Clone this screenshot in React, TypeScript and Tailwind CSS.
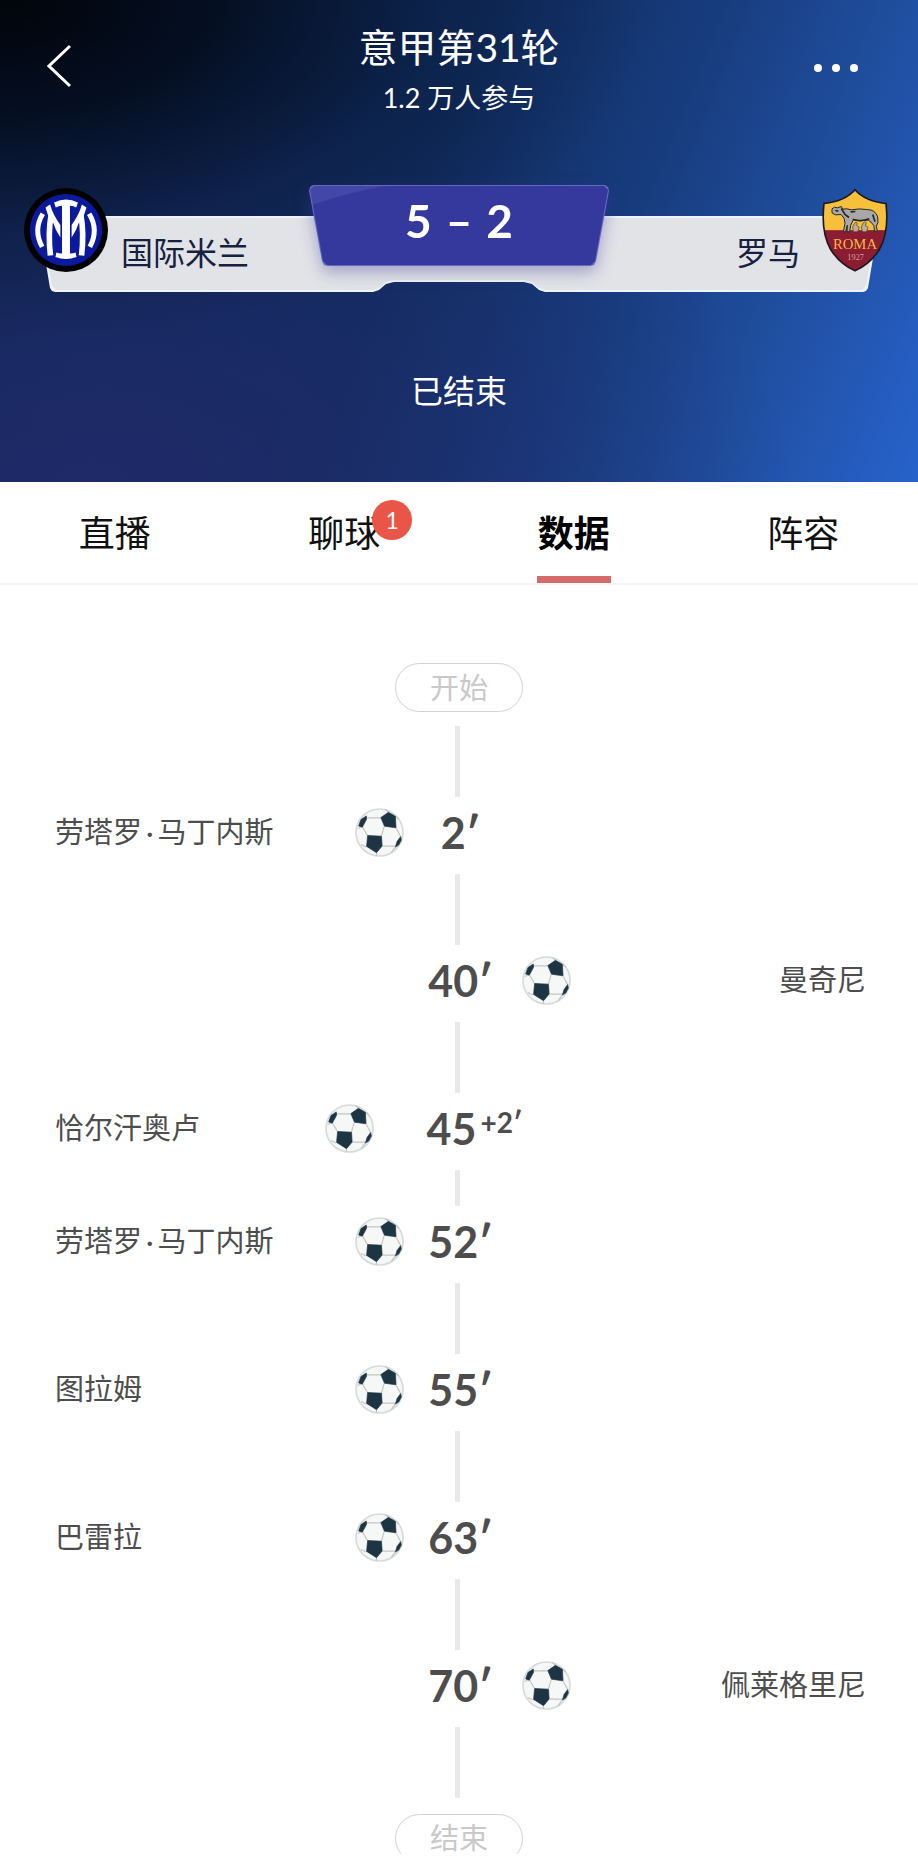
import React from "react";

type Side = "home" | "away";

interface MatchEvent {
  minute: string;
  extra?: string;
  player: string;
  side: Side;
  shortGap?: boolean;
}

const events: MatchEvent[] = [
  { minute: "2", player: "劳塔罗·马丁内斯", side: "home" },
  { minute: "40", player: "曼奇尼", side: "away" },
  { minute: "45", extra: "+2", player: "恰尔汗奥卢", side: "home", shortGap: true },
  { minute: "52", player: "劳塔罗·马丁内斯", side: "home" },
  { minute: "55", player: "图拉姆", side: "home" },
  { minute: "63", player: "巴雷拉", side: "home" },
  { minute: "70", player: "佩莱格里尼", side: "away" },
];

const tabs = [
  { label: "直播" },
  { label: "聊球", badge: 1 },
  { label: "数据", active: true },
  { label: "阵容" },
];

function InterCrest() {
  return (
    <svg viewBox="10 10 254 254" className="size-[84px] shrink-0" aria-hidden="true">
      <circle cx="137" cy="137" r="127" fill="#020205" />
      <circle cx="137" cy="137" r="109" fill="#0b1a9c" />
      <path d="M101 54 Q137 36 173 54 L168 69 Q160 64 149 64 L149 208 Q160 208 166 205 L169 219 Q137 231 105 219 L108 205 Q114 208 125 208 L125 64 Q114 64 106 69 Z" fill="#fff" />
      <g fill="none" stroke="#fff">
        <path d="M67 88 Q37 137 65 188" strokeWidth="15" />
        <path d="M92 92 Q82 148 90 214" strokeWidth="17" />
      </g>
      <path d="M75 69 L89 60 Q97 90 120 122 L120 160 Q106 140 97 112 L84 96 Z" fill="#fff" />
      <g transform="translate(274 0) scale(-1 1)">
        <g fill="none" stroke="#fff">
          <path d="M67 88 Q37 137 65 188" strokeWidth="15" />
          <path d="M92 92 Q82 148 90 214" strokeWidth="17" />
        </g>
        <path d="M75 69 L89 60 Q97 90 120 122 L120 160 Q106 140 97 112 L84 96 Z" fill="#fff" />
      </g>
    </svg>
  );
}

function RomaCrest() {
  return (
    <svg viewBox="18 8 198 254" className="h-[85px] w-[66px] shrink-0" aria-hidden="true">
      <defs>
        <clipPath id="shield">
          <path d="M117 13 Q88 47 24 54 Q14 140 44 192 Q72 236 117 256 Q162 236 190 192 Q220 140 210 54 Q146 47 117 13Z" />
        </clipPath>
      </defs>
      <g clipPath="url(#shield)">
        <rect x="10" y="0" width="210" height="140" fill="#f6c03c" />
        <rect x="10" y="134" width="210" height="130" fill="#8c1c31" />
      </g>
      <path d="M117 13 Q88 47 24 54 Q14 140 44 192 Q72 236 117 256 Q162 236 190 192 Q220 140 210 54 Q146 47 117 13Z" fill="none" stroke="#1d1820" strokeWidth="5" />
      <path d="M48 70 L56 65 L64 67 L76 63 L80 71 Q94 68 106 73 Q130 68 152 72 Q178 72 185 94 Q189 114 181 122 L184 137 L175 137 L174 121 L165 110 L157 104 Q134 108 112 103 L104 119 L101 139 L93 139 L94 119 L89 139 L82 139 L87 113 L84 98 L75 87 L58 88 L48 82Z" fill="#a9a8a6" stroke="#28262a" strokeWidth="3" strokeLinejoin="round" />
      <path d="M76 69 L87 87 L99 96 M104 79 L118 78 M110 101 Q132 110 160 100 M170 87 L177 109 M58 75 L67 77" fill="none" stroke="#28262a" strokeWidth="5" />
      <path d="M116 113 q4-7 8 0 l-2 7 8 5 -5 14 h-13 l-2-15z M142 112 q5-7 9 0 l-3 8 8 5 -4 14 h-13 l-3-15z" fill="#b7aea0" stroke="#4a3b28" strokeWidth="2" />
      <text x="117" y="189" textAnchor="middle" fontSize="44" fontFamily="Liberation Serif, serif" fill="#f4b840">ROMA</text>
      <text x="119" y="222" textAnchor="middle" fontSize="25" fontFamily="Liberation Serif, serif" fill="#d5a0a0">1927</text>
    </svg>
  );
}

function Ball() {
  return (
    <svg viewBox="16 16 148 148" className="size-[49px] shrink-0" aria-hidden="true">
      <circle cx="90" cy="90" r="71" fill="#f6f7f7" stroke="#d6dbdc" strokeWidth="5" />
      <path
        d="M48 46H94M38 72L53 98M38 72L24 78M104 72L96 100M141 78L153 101M99 131H138M50 134L34 126M81 152V160M139 41L148 50M116 28L108 20M137 134L126 150"
        fill="none"
        stroke="#c6c6bd"
        strokeWidth="3.5"
      />
      <g fill="#1d3543" stroke="#1d3543" strokeWidth="2" strokeLinejoin="round">
        <path d="M94 45L117 29L138 41L140 76L105 71Z" />
        <path d="M54 99L96 101L98 131L81 151L51 132Z" />
        <path d="M27 70L34 51L50 40L51 50L38 74Z" />
        <path d="M154 102L143 117L138 134L148 128L156 113Z" />
      </g>
    </svg>
  );
}

function Header() {
  return (
    <header className="h-[482px] bg-[radial-gradient(ellipse_at_0%_0%,#01040a_0%,rgba(2,8,20,0.8)_16%,rgba(4,16,40,0.3)_34%,rgba(4,16,40,0)_50%),radial-gradient(ellipse_at_10%_100%,rgba(34,42,108,0.85)_0%,rgba(30,40,104,0)_60%),linear-gradient(112deg,#0d2650_0%,#102c5e_45%,#173b7c_64%,#1f4d9c_80%,#2762cc_100%)] pt-6 text-white">
      <div className="flex items-start justify-between pr-[60px] pl-[47px]">
        <div className="flex flex-1">
          <button type="button" aria-label="返回" className="mt-5 w-[42px]">
            <svg viewBox="0 0 25 44" className="h-11 w-[25px]" fill="none" stroke="#fff" strokeWidth="3">
              <path d="M23 2L2 22L23 42" />
            </svg>
          </button>
        </div>
        <div className="flex flex-col items-center pl-[13px]">
          <h1 className="text-[39px] leading-[46px]">意甲第31轮</h1>
          <p className="mt-2 text-[27px] leading-10">1.2 万人参与</p>
        </div>
        <div className="flex flex-1 justify-end">
          <button type="button" aria-label="更多" className="mt-10 flex gap-[10px]">
            <span className="size-2 rounded-full bg-white" />
            <span className="size-2 rounded-full bg-white" />
            <span className="size-2 rounded-full bg-white" />
          </button>
        </div>
      </div>

      <section aria-label="比分" className="relative mt-[67px] h-[107px]">
        <div className="absolute inset-x-[38px] top-[31px] h-[76px] bg-[#eef4ff] [clip-path:polygon(0_0,100%_0,calc(100%_-_12px)_72px,calc(100%_-_14px)_75px,calc(100%_-_17px)_76px,calc(50%_+_86px)_76px,calc(50%_+_80px)_74px,calc(50%_+_73px)_68px,calc(50%_+_65px)_66px,calc(50%_-_65px)_66px,calc(50%_-_73px)_68px,calc(50%_-_80px)_74px,calc(50%_-_86px)_76px,17px_76px,14px_75px,12px_72px)]">
          <div className="mt-[2px] h-[72px] bg-[#e2e3e7] [clip-path:polygon(2px_0,calc(100%_-_2px)_0,calc(100%_-_14px)_68px,calc(100%_-_18px)_72px,calc(50%_+_86px)_72px,calc(50%_+_80px)_70px,calc(50%_+_73px)_64px,calc(50%_+_65px)_62px,calc(50%_-_65px)_62px,calc(50%_-_73px)_64px,calc(50%_-_80px)_70px,calc(50%_-_86px)_72px,18px_72px,14px_68px)]" />
        </div>
        <div className="relative grid grid-cols-[1fr_300px_1fr] items-start">
          <div className="flex items-start gap-[13px] pl-6">
            <div className="mt-[3px]">
              <InterCrest />
            </div>
            <span className="mt-12 text-[32px] leading-10 text-[#15213f]">国际米兰</span>
          </div>
          <div className="drop-shadow-[0_6px_8px_rgba(60,60,150,0.4)]">
            <div className="h-[81px] bg-[#6468bd] p-px [clip-path:polygon(4px_0,296px_0,299px_2px,300px_6px,287px_76px,285px_80px,281px_81px,19px_81px,15px_80px,13px_76px,0_6px,1px_2px)]">
              <div className="flex h-[79px] justify-center gap-[14px] bg-[radial-gradient(ellipse_at_100%_100%,#35389d_0%,#35389d_88%,#4348a8_89%)] pt-[6px] text-[46px] leading-[58px] font-bold [clip-path:polygon(4px_0,294px_0,298px_4px,285px_75px,281px_79px,17px_79px,13px_75px,0_4px)]">
                <span>5</span>
                <span>–</span>
                <span>2</span>
              </div>
            </div>
          </div>
          <div className="flex items-start justify-end gap-[22px] pr-[30px]">
            <span className="mt-12 text-[32px] leading-10 text-[#15213f]">罗马</span>
            <div className="mt-[3px]">
              <RomaCrest />
            </div>
          </div>
        </div>
      </section>

      <p className="mt-[79px] text-center text-[32px] leading-10">已结束</p>
    </header>
  );
}

function TabBar() {
  return (
    <nav className="grid grid-cols-4 border-b-2 border-[#f6f6f6]">
      {tabs.map((tab) => (
        <button
          key={tab.label}
          type="button"
          className={
            tab.active
              ? "flex h-[101px] flex-col items-center text-[36px] leading-[94px] font-bold text-black"
              : "flex h-[101px] flex-col items-center text-[36px] leading-[94px] text-[#111]"
          }
        >
          <span className="relative mt-[4px] block h-[90px]">
            {tab.label}
            {tab.badge && (
              <span className="absolute top-[14px] left-[64px] flex size-[40px] items-center justify-center rounded-full bg-[#e95648] text-[23px] leading-none text-white">
                {tab.badge}
              </span>
            )}
          </span>
          {tab.active && <span className="h-[7px] w-[74px] bg-[#d56a6c]" />}
        </button>
      ))}
    </nav>
  );
}

function Connector({ short }: { short?: boolean }) {
  return (
    <div
      className={
        short ? "mx-auto h-9 w-[9px] border-r-4 border-white bg-[#e9e9e9]" : "mx-auto h-[71px] w-[9px] border-r-4 border-white bg-[#e9e9e9]"
      }
    />
  );
}

function PlayerName({ name }: { name: string }) {
  const [first, last] = name.split("·");
  return (
    <span className="leading-9">
      {first}
      {last && <span className="px-1">·</span>}
      {last}
    </span>
  );
}

function EventRow({ event }: { event: MatchEvent }) {
  const home = event.side === "home";
  return (
    <li className="grid h-[77px] grid-cols-[1fr_auto_1fr] items-center pr-[52px] pb-[7px] pl-[55px] text-[29px] text-[#4d4d4d]">
      <div className="flex items-center justify-between">
        {home && <PlayerName name={event.player} />}
        {home && <Ball />}
      </div>
      <div
        className={
          event.extra
            ? "flex w-[174px] justify-center pl-7 text-[43px] leading-none font-bold"
            : "flex w-[114px] justify-center text-[43px] leading-none font-bold"
        }
      >
        <span>
          {event.minute}
          {!event.extra && "′"}
        </span>
        {event.extra && <span className="ml-1 text-[28px] leading-[30px]">{event.extra}′</span>}
      </div>
      <div className="flex items-center justify-between pl-1">
        {!home && <Ball />}
        {!home && <PlayerName name={event.player} />}
      </div>
    </li>
  );
}

export default function App() {
  return (
    <main className="min-h-screen bg-white font-[Lato,'Noto_Sans_CJK_SC',sans-serif]">
      <Header />
      <TabBar />
      <section aria-label="比赛事件" className="pt-[78px] pb-5">
        <div className="mx-auto mb-[14px] flex h-[49px] w-[128px] items-center justify-center rounded-full border border-[#d2d2d2] text-[29px] leading-none text-[#c9c9c9]">
          开始
        </div>
        <Connector />
        <ol>
          {events.map((event, i) => (
            <React.Fragment key={i}>
              <EventRow event={event} />
              <Connector short={event.shortGap} />
            </React.Fragment>
          ))}
        </ol>
        <div className="relative mx-auto mt-4 flex h-10 w-[128px] justify-center pt-[6px] text-[29px] leading-9 text-[#c9c9c9]">
          <div className="absolute inset-0 overflow-hidden">
            <div className="h-[49px] rounded-full border border-[#d2d2d2]" />
          </div>
          <span>结束</span>
        </div>
      </section>
    </main>
  );
}
